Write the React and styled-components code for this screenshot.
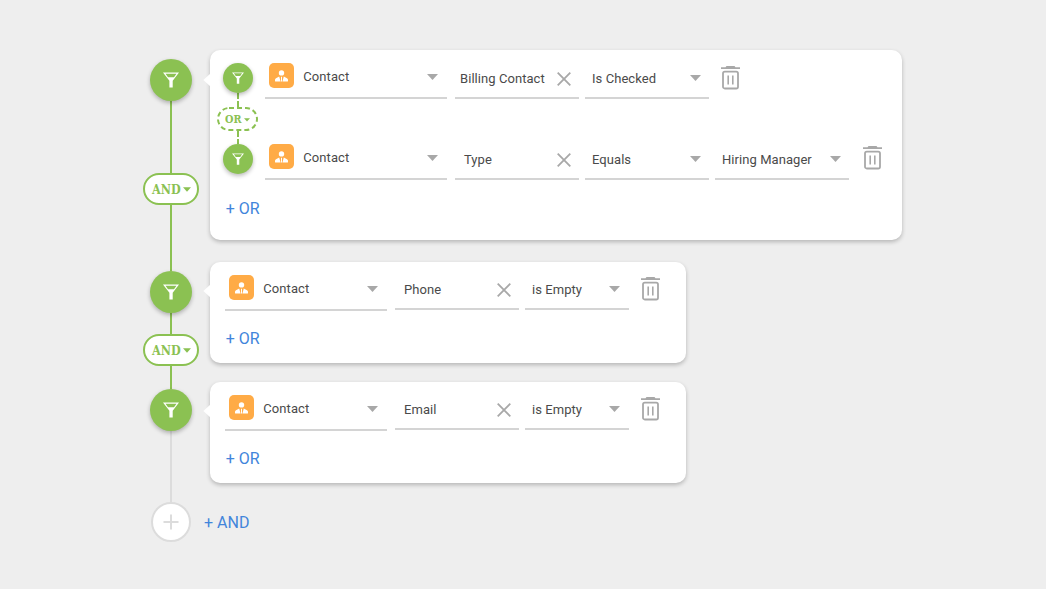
import React from "react";
import styled, { createGlobalStyle, css } from "styled-components";

const GREEN = "#8bc152";

const GlobalStyle = createGlobalStyle`
  * { box-sizing: border-box; }
  body {
    margin: 0;
    background: #eeeeee;
    font-family: Roboto, "Liberation Sans", sans-serif;
    color: #4a4a4a;
  }
`;

const Page = styled.main`
  display: flex;
  align-items: flex-start;
  width: 1046px;
  height: 589px;
  padding: 50px 0 0 143px;
  overflow: hidden;
`;

const Rail = styled.div`
  display: flex;
  flex-direction: column;
  align-items: center;
  width: 56px;
  padding-top: 9px;
`;

const InnerRail = styled.div`
  display: flex;
  flex-direction: column;
  align-items: center;
  width: 41px;
  margin: 0 7px 0 7px;
`;

const Node = styled.div`
  display: flex;
  align-items: center;
  justify-content: center;
  flex: none;
  width: ${(p) => p.$size}px;
  height: ${(p) => p.$size}px;
  border-radius: 50%;
  background: ${GREEN};
  box-shadow: 0 2px 4px rgba(0, 0, 0, 0.27);
  z-index: 1;
`;

const AddNode = styled(Node)`
  background: #fff;
  border: 2px solid #dcdcdc;
  box-shadow: none;
`;

const Line = styled.div`
  flex: none;
  width: 2px;
  height: ${(p) => p.$h}px;
  background: ${(p) => (p.$muted ? "#dcdcdc" : GREEN)};
`;

const DashedLine = styled.div`
  flex: none;
  width: 2px;
  height: ${(p) => p.$h}px;
  background: repeating-linear-gradient(${GREEN} 0 6px, transparent 6px 8px);
`;

const Pill = styled.button`
  position: relative;
  display: flex;
  align-items: center;
  flex: none;
  width: 56px;
  height: 32px;
  padding: 0 0 0 7px;
  border: 2px solid ${GREEN};
  border-radius: 16px;
  background: #fff;
  color: ${GREEN};
  font: bold 13.5px "DejaVu Serif", serif;
`;

const OrPill = styled(Pill)`
  width: 41px;
  height: 24px;
  padding: 1px 0 0 8px;
  border: 0;
  background: none;
  font-size: 11px;
`;

const Outline = styled.svg`
  position: absolute;
  inset: 0;
`;

const PillLabel = styled.span`
  display: block;
  width: ${(p) => p.$w}px;
  white-space: nowrap;
  line-height: 16px;
  transform: scaleX(${(p) => p.$scale});
  transform-origin: left center;
`;

const PillCaret = styled.svg`
  margin-top: 1px;
`;

const Content = styled.div`
  display: flex;
  flex-direction: column;
  align-items: flex-start;
  padding-left: 11.5px;
`;

const Card = styled.section`
  position: relative;
  display: flex;
  width: ${(p) => p.$w}px;
  height: ${(p) => p.$h}px;
  margin-bottom: ${(p) => p.$gap}px;
  padding-top: 13px;
  border-radius: 10px;
  background: #fff;
  box-shadow: 0 2px 4px rgba(0, 0, 0, 0.24);
  margin-left: -0.2px;
`;

const Pointer = styled.svg`
  position: absolute;
  left: -7px;
  top: ${(p) => p.$top}px;
`;

const Groups = styled.div`
  display: flex;
  flex-direction: column;
  align-items: flex-start;
  padding-left: ${(p) => p.$inset || 0}px;
`;

const Row = styled.div`
  display: flex;
  align-items: flex-start;
  height: ${(p) => p.$h}px;
`;

const Field = styled.div`
  display: flex;
  align-items: flex-start;
  justify-content: space-between;
  flex: none;
  width: ${(p) => p.$w}px;
  height: ${(p) => p.$h}px;
  margin-right: ${(p) => p.$mr}px;
  padding: 0 ${(p) => p.$pr || 8}px 0 ${(p) => p.$pl}px;
  border-bottom: 2px solid #d4d4d4;
`;

const ObjectLabel = styled.div`
  display: flex;
  gap: 9px;
`;

const Text = styled.span`
  padding-top: ${(p) => p.$pt}px;
  font-size: 13px;
  line-height: 16px;
  letter-spacing: ${(p) => p.$ls || 0.06}px;
  white-space: nowrap;
`;

const Caret = styled.svg`
  flex: none;
  margin-top: ${(p) => p.$mt}px;
`;

const Badge = styled.div`
  display: flex;
  align-items: center;
  justify-content: center;
  width: 25px;
  height: 25px;
  border-radius: 5px;
  background: #ffab46;
`;

const TrashButton = styled.div`
  display: flex;
  margin: ${(p) => p.$mt}px 0 0 ${(p) => p.$ml}px;
`;

const Link = styled.a`
  color: #4285db;
  font-size: 16px;
  line-height: 20px;
  white-space: nowrap;
  ${(p) => p.$and && css`margin: 30px 0 0 -6.5px;`}
`;

const LinkShift = styled.div`
  display: flex;
  margin: 1px 0 0 ${(p) => p.$ml}px;
`;

const Funnel = ({ s }) => (
  <svg width={s} height={s} viewBox="0 0 16 16">
    <path fill="#fff" fillRule="evenodd" d="M0 .5h16L9.7 8.8V15.5H6.4V8.8ZM2.5 1.7l2.5 3.6h6l2.5-3.6Z" />
  </svg>
);

const Down = ({ mt }) => (
  <Caret $mt={mt} width="11" height="6" viewBox="0 0 11 6">
    <path d="M0 0h11L5.5 6Z" fill="#a8a8a8" />
  </Caret>
);

const Clear = ({ mt }) => (
  <Caret $mt={mt} width="14" height="14" viewBox="0 0 14 14">
    <path d="M.7.7 13.3 13.3M13.3.7.7 13.3" stroke="#a8a8a8" strokeWidth="1.8" />
  </Caret>
);

const Trash = () => (
  <svg width="19" height="24" viewBox="0 0 19 24" fill="none" stroke="#a8a8a8">
    <path d="M5.5 0h8l1 1.2H19v1.9H0V1.2h4.5Z" fill="#a8a8a8" stroke="none" />
    <rect x="2" y="5.6" width="15" height="16.9" rx="1.8" strokeWidth="1.8" />
    <path d="M7.2 9.5v9M11.8 9.5v9" strokeWidth="1.6" />
  </svg>
);

const Person = () => (
  <svg width="13" height="12" viewBox="0 0 13 12" fill="#fff">
    <circle cx="6.5" cy="2.9" r="2.7" />
    <path d="M4.2 6.6 5.6 11.6H.7Q0 11.6 0 10.9V9.8Q0 8.8 1 8.2ZM8.8 6.6 7.4 11.6h4.9q.7 0 .7-.7V9.8q0-1-1-1.6ZM6 6.8h1v4.8H6Z" />
  </svg>
);

const ContactField = ({ w, caret }) => (
  <Field $w={w} $h={36} $mr={7.2} $pl={4} $pr={9}>
    <ObjectLabel>
      <Badge><Person /></Badge>
      <Text $pt={6} $ls={0.08}>Contact</Text>
    </ObjectLabel>
    <Down mt={caret} />
  </Field>
);

const ValueField = ({ w, h, mr = 5.5, pl, pt, children, clear, mt, pr }) => (
  <Field $w={w} $h={h} $mr={mr} $pl={pl} $pr={pr}>
    <Text $pt={pt}>{children}</Text>
    {clear ? <Clear mt={mt} /> : <Down mt={mt} />}
  </Field>
);

const Tip = ({ top }) => (
  <Pointer $top={top} width="8" height="14" viewBox="0 0 8 14">
    <path d="M8 0v14L.4 7Z" fill="#fff" />
  </Pointer>
);

const And = () => (
  <Pill>
    <PillLabel $w={31} $scale={0.83}>AND</PillLabel>
    <PillCaret width="8" height="5" viewBox="0 0 8 5"><path d="M0 .3h8L4 4.8Z" fill={GREEN} /></PillCaret>
  </Pill>
);

const Or = () => (
  <OrPill>
    <Outline width="41" height="24" viewBox="0 0 41 24">
      <rect x="1" y="1" width="39" height="22" rx="11" fill="none" stroke={GREEN} strokeWidth="2" strokeDasharray="5 3" />
    </Outline>
    <PillLabel $w={19} $scale={0.88}>OR</PillLabel>
    <svg width="6" height="4" viewBox="0 0 6 4"><path d="M0 .2h6L3 3.6Z" fill={GREEN} /></svg>
  </OrPill>
);

const SimpleCard = ({ name, gap }) => (
  <Card $w={476} $h={101} $gap={gap}>
    <Tip top={22} />
    <Groups $inset={15}>
      <Row $h={53}>
        <ContactField w={162} caret={11} />
        <ValueField w={124.5} h={35} pl={9.5} pt={7} clear mt={8}>{name}</ValueField>
        <ValueField w={104.5} h={35} mr={0} pl={7.5} pr={9} pt={7} mt={11}>is Empty</ValueField>
        <TrashButton $mt={2} $ml={12}><Trash /></TrashButton>
      </Row>
      <LinkShift $ml={0.5}><Link>+ OR</Link></LinkShift>
    </Groups>
  </Card>
);

export default function App() {
  return (
    <>
      <GlobalStyle />
      <Page>
        <Rail>
          <Node $size={42}><Funnel s={16} /></Node>
          <Line $h={72} />
          <And />
          <Line $h={66} />
          <Node $size={42}><Funnel s={16} /></Node>
          <Line $h={21} />
          <And />
          <Line $h={23} />
          <Node $size={42}><Funnel s={16} /></Node>
          <Line $h={71} $muted />
          <AddNode $size={40}>
            <svg width="16" height="16" viewBox="0 0 16 16"><path d="M.5 8h15M8 .5v15" stroke="#dcdcdc" strokeWidth="2" /></svg>
          </AddNode>
        </Rail>
        <Content>
          <Card $w={692} $h={190} $gap={22}>
            <Tip top={23} />
            <InnerRail>
              <Node $size={30}><Funnel s={12} /></Node>
              <DashedLine $h={14} />
              <Or />
              <DashedLine $h={13} />
              <Node $size={30}><Funnel s={12} /></Node>
            </InnerRail>
            <Groups>
              <Row $h={81}>
                <ContactField w={182} caret={11} />
                <ValueField w={124.5} h={36} pl={5.5} pt={8} clear mt={9}>Billing Contact</ValueField>
                <ValueField w={124.5} h={36} mr={0} pl={7.5} pt={8} mt={12}>Is Checked</ValueField>
                <TrashButton $mt={3} $ml={12}><Trash /></TrashButton>
              </Row>
              <Row $h={54}>
                <ContactField w={182} caret={11} />
                <ValueField w={124.5} h={36} pl={9.5} pt={8} clear mt={9}>Type</ValueField>
                <ValueField w={124.5} h={36} pl={7.5} pt={8} mt={12}>Equals</ValueField>
                <ValueField w={134.5} h={36} mr={0} pl={7.5} pt={8} mt={12}>Hiring Manager</ValueField>
                <TrashButton $mt={2} $ml={14}><Trash /></TrashButton>
              </Row>
              <LinkShift $ml={-39.5}><Link>+ OR</Link></LinkShift>
            </Groups>
          </Card>
          <SimpleCard name="Phone" gap={19} />
          <SimpleCard name="Email" gap={0} />
          <Link $and>+ AND</Link>
        </Content>
      </Page>
    </>
  );
}
